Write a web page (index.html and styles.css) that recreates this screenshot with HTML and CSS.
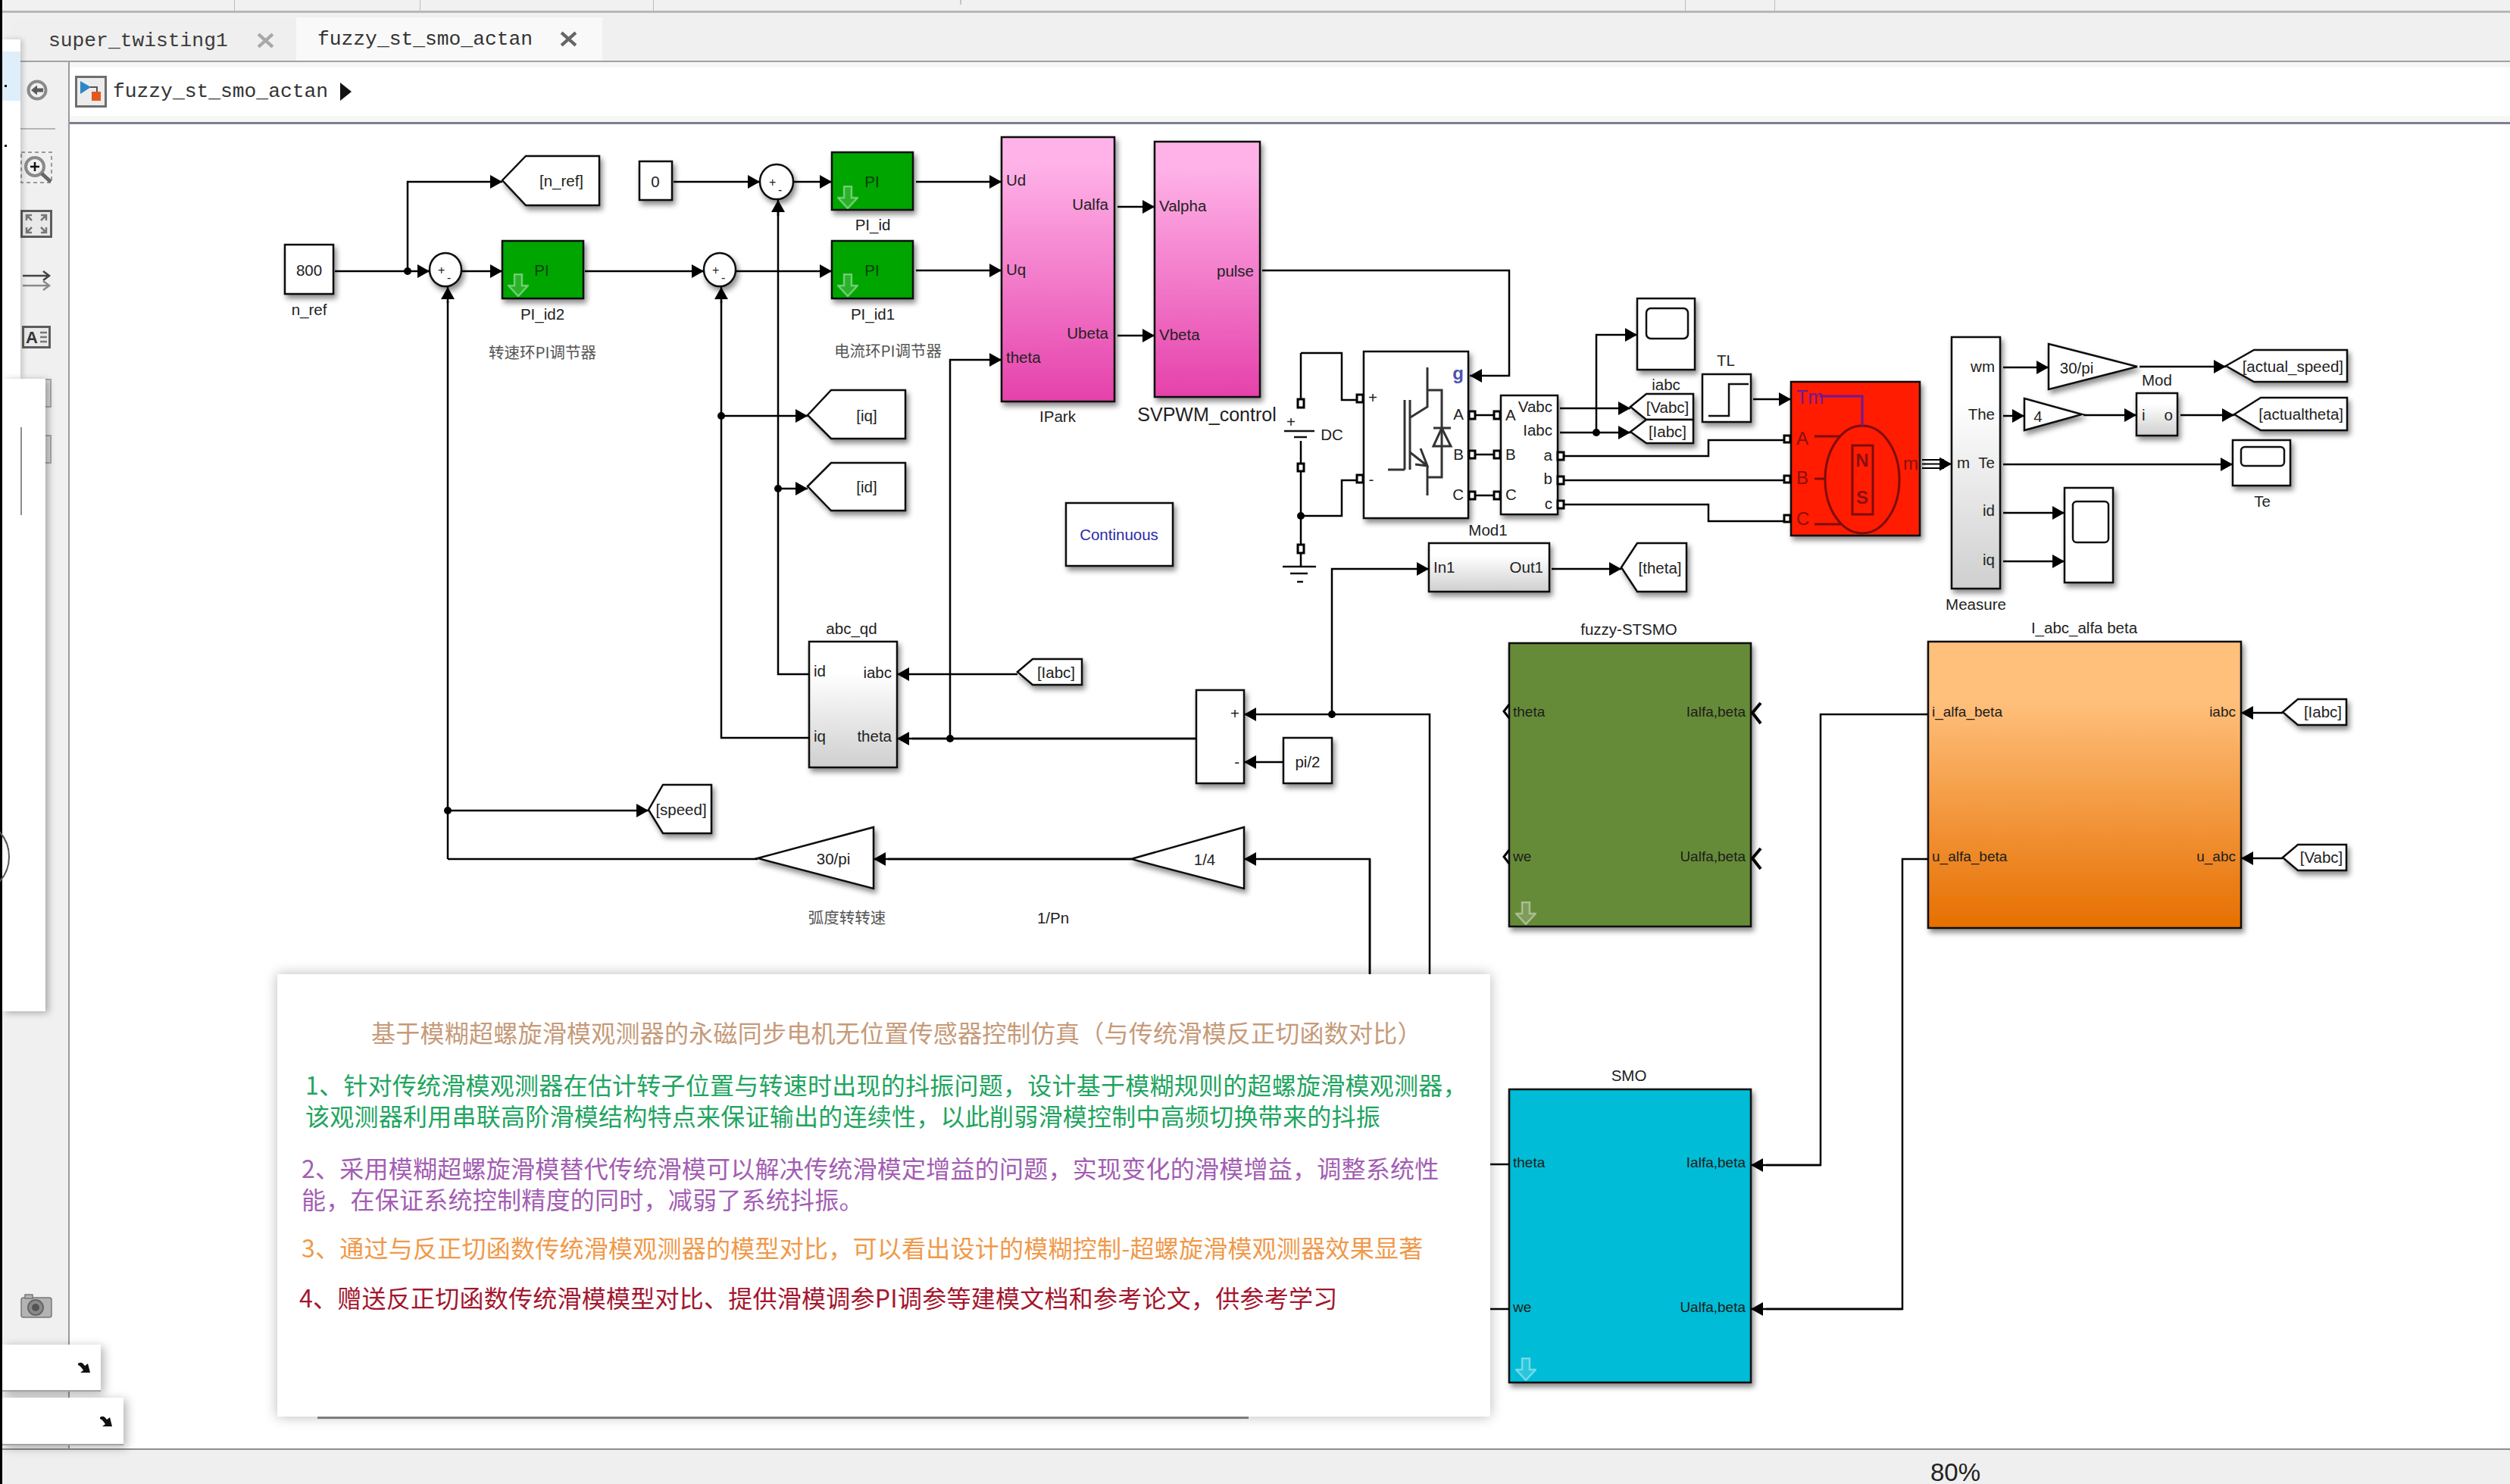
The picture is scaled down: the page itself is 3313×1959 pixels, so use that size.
FILE: index.html
```html
<!DOCTYPE html>
<html lang="zh-Hans">
<head>
  <meta charset="UTF-8">
  <title>fuzzy_st_smo_actan</title>
  <link rel="stylesheet" href="styles.css">
</head>
<body>
<div class="app">
  <div class="top-strip">
    <span class="strip-cell c1"></span><span class="strip-cell c2"></span><span class="strip-cell c3"></span>
    <span class="strip-cell c4"></span><span class="strip-cell c5"></span><span class="strip-cell c6"></span>
  </div>

  <div class="tabbar">
    <div class="tab">
      <span>super_twisting1</span>
      <svg class="tab-x" viewBox="0 0 22 20"><path d="M2 2L20 18M20 2L2 18"/></svg>
    </div>
    <div class="tab active">
      <span>fuzzy_st_smo_actan</span>
      <svg class="tab-x" viewBox="0 0 22 20"><path d="M2 2L20 18M20 2L2 18"/></svg>
    </div>
  </div>

  <div class="workspace">
    <aside class="toolbar">
      <svg class="tool tool-back" viewBox="0 0 28 28"><circle class="ring" cx="14" cy="14" r="11.5"/><path class="solid" d="M6 14l8-6.5v4h8v5h-8v4z"/></svg>
      <div class="tool-sep"></div>
      <svg class="tool tool-zoom" viewBox="0 0 42 42"><rect class="dash" x="1" y="1" width="40" height="40"/><circle class="ring" cx="19" cy="20" r="12"/><path class="plus" d="M19 14v12M13 20h12"/><path class="thick" d="M28 29l12 11"/></svg>
      <svg class="tool tool-fit" viewBox="0 0 42 37"><rect class="frame" x="1.5" y="1.5" width="39" height="34"/><path class="corner" d="M8 14V7h7M8 7l7 7M34 14V7h-7M34 7l-7 7M8 23v7h7M8 30l7-7M34 23v7h-7M34 30l-7-7"/></svg>
      <svg class="tool tool-route" viewBox="0 0 40 28"><path class="r1" d="M2 7h35M29 1l8 6-8 6"/><path class="r2" d="M2 20h35M29 14l8 6-8 6"/></svg>
      <svg class="tool tool-note" viewBox="0 0 38 30"><rect class="frame" x="1.5" y="1.5" width="35" height="27"/><text x="5" y="23">A</text><path class="corner" d="M24 9h9M24 15h9M24 21h9"/></svg>
      <div class="tool-stub stub-a"></div>
      <div class="tool-stub stub-b"></div>
      <svg class="tool tool-camera" viewBox="0 0 42 32"><rect class="cam" x="1" y="5" width="40" height="26" rx="3"/><rect class="cam" x="6" y="1" width="10" height="5"/><circle class="lens" cx="20" cy="18" r="10"/><circle class="lens-in" cx="20" cy="18" r="5"/></svg>
    </aside>

    <main class="canvas-col">
      <div class="breadcrumb">
        <div class="crumb-row">
          <svg class="crumb-icon" viewBox="0 0 42 42"><rect x="1.5" y="1.5" width="39" height="39" fill="#ececec" stroke="#6e6e6e" stroke-width="3"/><path d="M7 7l14 8-14 9z" fill="#2f86c6"/><path d="M20 15h9v7" fill="none" stroke="#555" stroke-width="2"/><rect x="22" y="21" width="12" height="12" fill="#e2591f"/></svg>
          <span class="crumb-text">fuzzy_st_smo_actan</span>
          <span class="crumb-arrow"></span>
        </div>
      </div>

      <div class="canvas">
        <svg class="diagram" viewBox="92 164 3221 1748" width="3221" height="1748">
          <defs>
            <filter id="sh" x="-5%" y="-5%" width="110%" height="110%">
              <feDropShadow dx="3" dy="5" stdDeviation="3.5" flood-color="#000" flood-opacity=".45"/>
            </filter>
            <linearGradient id="gPink" x1="0" y1="0" x2="0" y2="1"><stop offset=".1" stop-color="#ffb2e8"/><stop offset="1" stop-color="#e541aa"/></linearGradient>
            <linearGradient id="gGray" x1="0" y1="0" x2="0" y2="1"><stop offset=".25" stop-color="#fff"/><stop offset="1" stop-color="#cfcfcf"/></linearGradient>
            <linearGradient id="gOrange" x1="0" y1="0" x2="0" y2="1"><stop offset=".2" stop-color="#ffc07c"/><stop offset="1" stop-color="#e66f00"/></linearGradient>
            <marker id="ah" markerUnits="userSpaceOnUse" markerWidth="18" markerHeight="20" refX="17" refY="9" orient="auto">
              <path d="M1 0L17 9L1 18z" fill="#000"/>
            </marker>
            <symbol id="down" viewBox="0 0 28 31">
              <path d="M9 1h10v15h8L14 30 1 16h8z" fill="rgba(255,255,255,.16)" stroke="rgba(255,255,255,.4)" stroke-width="2.5"/>
            </symbol>
          </defs>

          <!-- blocks -->
          <g class="blk" filter="url(#sh)">
            <rect x="376" y="323" width="64" height="65"/>
            <polygon points="663,238 694,206 791,206 791,271 694,271"/>
            <rect x="844" y="213" width="43" height="51"/>
            <ellipse cx="1025" cy="240" rx="22" ry="23"/>
            <ellipse cx="588" cy="356" rx="21" ry="22"/>
            <ellipse cx="950" cy="356" rx="21" ry="22"/>
            <rect class="green" x="663" y="318" width="107" height="76"/>
            <rect class="green" x="1098" y="201" width="107" height="76"/>
            <rect class="green" x="1098" y="318" width="107" height="76"/>
            <rect x="1322" y="181" width="149" height="349" fill="url(#gPink)"/>
            <rect x="1524" y="187" width="139" height="337" fill="url(#gPink)"/>
            <polygon points="1066,548 1097,515 1195,515 1195,579 1097,579"/>
            <polygon points="1066,642 1097,611 1195,611 1195,674 1097,674"/>
            <rect x="1407" y="664" width="141" height="83"/>
            <rect x="1800" y="464" width="138" height="220"/>
            <rect x="1981" y="522" width="75" height="157"/>
            <rect x="2161" y="394" width="76" height="94"/>
            <polygon points="2152,537 2173,520 2235,520 2235,554 2173,554"/>
            <polygon points="2152,570 2173,554 2235,554 2235,585 2173,585"/>
            <rect x="2247" y="494" width="64" height="63"/>
            <rect class="red" x="2364" y="504" width="170" height="203"/>
            <rect x="2576" y="445" width="64" height="332" fill="url(#gGray)"/>
            <polygon points="2704,454 2821,484 2704,514"/>
            <polygon points="2672,526 2748,547 2672,568"/>
            <rect x="2820" y="519" width="54" height="56" fill="url(#gGray)"/>
            <polygon points="2938,483 2975,462 3098,462 3098,504 2975,504"/>
            <polygon points="2949,547 2984,525 3098,525 3098,568 2984,568"/>
            <rect x="2947" y="581" width="76" height="60"/>
            <rect x="2725" y="644" width="64" height="125"/>
            <rect x="1886" y="717" width="159" height="64" fill="url(#gGray)"/>
            <polygon points="2140,749 2161,717 2226,717 2226,781 2161,781"/>
            <rect x="1068" y="847" width="116" height="166" fill="url(#gGray)"/>
            <polygon points="1343,887 1363,870 1428,870 1428,904 1363,904"/>
            <rect x="1579" y="911" width="63" height="123"/>
            <rect x="1694" y="974" width="64" height="60"/>
            <polygon points="856,1069 875,1036 939,1036 939,1100 875,1100"/>
            <polygon points="1000,1133 1153,1092 1153,1173"/>
            <polygon points="1493,1134 1642,1092 1642,1173"/>
            <rect class="olive" x="1992" y="849" width="319" height="374"/>
            <rect class="cyan" x="1992" y="1438" width="319" height="387"/>
            <rect x="2545" y="847" width="413" height="378" fill="url(#gOrange)"/>
            <polygon points="3013,940 3033,923 3097,923 3097,957 3033,957"/>
            <polygon points="3013,1132 3033,1115 3097,1115 3097,1149 3033,1149"/>
          </g>

          <!-- scope screens, motor and inverter drawings -->
          <g class="draw">
            <rect x="2173" y="407" width="55" height="40" rx="6"/>
            <rect x="2958" y="590" width="57" height="25" rx="5"/>
            <rect x="2736" y="662" width="47" height="54" rx="5"/>
            <path d="M2255 549h27v-42h26"/>
            <path class="igbt" d="M1884 485v52l-24 15M1884 515h19v115h-19M1884 615v39M1854 528v92M1861 528v92M1832 620h22M1861 597l23 18M1875 592l9 23-16-2"/>
            <path class="igbt" d="M1892 565h23M1903 565l-11 24h23z"/>
            <path d="M1695 569h40M1708 577h17M1693 748h44M1703 757h23M1712 768h8"/>
          </g>
          <g class="motor">
            <ellipse cx="2458" cy="633" rx="49" ry="71"/>
            <rect x="2445" y="588" width="27" height="91"/>
            <path d="M2395 576h35M2395 632h13M2395 692h35"/>
            <path class="tm" d="M2402 523h56v39"/>
          </g>

          <!-- wires -->
          <g class="w">
            <path d="M591 397V1134M591 1134H1000"/>
            <path d="M952 397V974H1068"/>
            <path d="M1027 280V890H1068"/>
            <path d="M1204 975H1579"/>
            <path d="M1172 1134H1493"/>
            <path d="M1808 1134V1290"/>
            <path d="M1717 466H1771V528H1792M1717 466V527M1717 582V724M1717 681H1771V634H1792M1717 724V748"/>
            <path d="M1947 548H1972M1947 600H1972M1947 654H1972"/>
            <path d="M2064 602H2255V581H2354M2064 634H2354M2064 666H2255V688H2354"/>
            <path class="bus" d="M2537 607H2566M2537 612.5H2566M2537 618H2566"/>
            <path d="M1965 1537H1992M1965 1728H1992"/>
            <path d="M2331 1538H2403V943H2545"/>
            <path d="M2331 1728H2511V1134H2545"/>
          </g>
          <g class="w" marker-end="url(#ah)">
            <path d="M442 358H567"/>
            <path d="M538 358V240H663"/>
            <path d="M610 358H663"/>
            <path d="M772 358H929"/>
            <path d="M972 358H1098"/>
            <path d="M889 240H1003"/>
            <path d="M1047 240H1098"/>
            <path d="M591 400V379"/>
            <path d="M952 400V379"/>
            <path d="M1027 285V264"/>
            <path d="M1209 240H1322"/>
            <path d="M1209 357H1322"/>
            <path d="M1254 975V475H1322"/>
            <path d="M1475 273H1524"/>
            <path d="M1475 443H1524"/>
            <path d="M1666 357H1992V496H1940"/>
            <path d="M952 549H1066"/>
            <path d="M1027 645H1066"/>
            <path d="M2059 539H2152"/>
            <path d="M2059 571H2152"/>
            <path d="M2107 571V442H2161"/>
            <path d="M2314 527H2364"/>
            <path class="bus" d="M2560 612.5H2576"/>
            <path d="M2644 485H2704"/>
            <path d="M2824 484H2938"/>
            <path d="M2644 549H2672"/>
            <path d="M2750 548H2820"/>
            <path d="M2878 548H2949"/>
            <path d="M2644 613H2947"/>
            <path d="M2644 677H2725"/>
            <path d="M2644 741H2725"/>
            <path d="M2048 751H2140"/>
            <path d="M1758 943V751H1886"/>
            <path d="M1343 890H1184"/>
            <path d="M1579 975H1184"/>
            <path d="M1887 1290V943H1642"/>
            <path d="M1694 1006H1642"/>
            <path d="M1808 1290V1134H1642"/>
            <path d="M1493 1134H1153"/>
            <path d="M591 1070H856"/>
            <path d="M2403 1538H2311"/>
            <path d="M2511 1728H2311"/>
            <path d="M3013 941H2958"/>
            <path d="M3013 1133H2958"/>
          </g>
          <g class="chev">
            <path d="M1992 930l-7 9 7 9M1992 1122l-7 9 7 9"/>
            <path class="big" d="M2324 928l-11 13 11 14M2324 1120l-11 13 11 14"/>
          </g>

          <!-- junctions and ports -->
          <g class="dot">
            <circle cx="538" cy="358" r="5"/><circle cx="591" cy="1070" r="5"/>
            <circle cx="952" cy="549" r="5"/><circle cx="1027" cy="645" r="5"/>
            <circle cx="1254" cy="975" r="5"/><circle cx="1758" cy="943" r="5"/>
            <circle cx="1717" cy="681" r="5"/><circle cx="2107" cy="571" r="5"/>
          </g>
          <g class="port">
            <rect x="1791" y="521" width="8" height="10"/><rect x="1791" y="627" width="8" height="10"/>
            <rect x="1713" y="527" width="8" height="11"/><rect x="1713" y="612" width="8" height="10"/><rect x="1713" y="719" width="8" height="11"/>
            <rect x="1939" y="543" width="8" height="10"/><rect x="1939" y="595" width="8" height="10"/><rect x="1939" y="649" width="8" height="10"/>
            <rect x="1972" y="543" width="8" height="10"/><rect x="1972" y="595" width="8" height="10"/><rect x="1972" y="649" width="8" height="10"/>
            <rect x="2056" y="597" width="8" height="10"/><rect x="2056" y="629" width="8" height="10"/><rect x="2056" y="661" width="8" height="10"/>
            <rect x="2355" y="575" width="8" height="9"/><rect x="2355" y="628" width="8" height="9"/><rect x="2355" y="680" width="8" height="9"/>
          </g>
          <use href="#down" x="670" y="361" width="28" height="31"/>
          <use href="#down" x="1105" y="245" width="28" height="31"/>
          <use href="#down" x="1105" y="361" width="28" height="31"/>
          <use href="#down" x="2000" y="1190" width="28" height="31"/>
          <use href="#down" x="2000" y="1792" width="28" height="31"/>

          <!-- labels -->
          <g class="t">
            <text class="m" x="408" y="356">800</text>
            <text class="m" x="408" y="408">n_ref</text>
            <text class="m" x="741" y="238">[n_ref]</text>
            <text class="m" x="865" y="239">0</text>
            <text class="m" x="716" y="414">PI_id2</text>
            <text class="m" x="1152" y="296">PI_id</text>
            <text class="m" x="1152" y="414">PI_id1</text>
            <text class="m dk" x="715" y="356">PI</text>
            <text class="m dk" x="1151" y="239">PI</text>
            <text class="m dk" x="1151" y="356">PI</text>
            <text class="sm" x="1015" y="240">+</text><text class="sm" x="1027" y="250">-</text>
            <text class="sm" x="578" y="356">+</text><text class="sm" x="590" y="366">-</text>
            <text class="sm" x="940" y="356">+</text><text class="sm" x="952" y="366">-</text>
            <text class="m cn" x="716" y="464">转速环PI调节器</text>
            <text class="m cn" x="1172" y="462">电流环PI调节器</text>
            <text class="m cn" x="1118" y="1210">弧度转转速</text>
            <text class="m" x="1390" y="1211">1/Pn</text>
            <text x="1328" y="237">Ud</text><text x="1328" y="355">Uq</text><text x="1328" y="471">theta</text>
            <text class="e" x="1463" y="269">Ualfa</text><text class="e" x="1463" y="439">Ubeta</text>
            <text class="m" x="1396" y="549">IPark</text>
            <text x="1530" y="271">Valpha</text><text x="1530" y="441">Vbeta</text>
            <text class="e" x="1655" y="357">pulse</text>
            <text class="m big" x="1593" y="547">SVPWM_control</text>
            <text class="m" x="1144" y="548">[iq]</text>
            <text class="m" x="1144" y="642">[id]</text>
            <text class="m blue" x="1477" y="705">Continuous</text>
            <text x="1704" y="556" class="m">+</text>
            <text class="m" x="1758" y="573">DC</text>
            <text class="m" x="1812" y="524">+</text><text class="m" x="1810" y="632">-</text>
            <text class="e gate b" x="1932" y="492">g</text>
            <text class="e" x="1932" y="546">A</text><text class="e" x="1932" y="599">B</text><text class="e" x="1932" y="652">C</text>
            <text x="1987" y="547">A</text><text x="1987" y="599">B</text><text x="1987" y="652">C</text>
            <text class="e" x="2049" y="536">Vabc</text><text class="e" x="2049" y="567">Iabc</text>
            <text class="e" x="2049" y="600">a</text><text class="e" x="2049" y="631">b</text><text class="e" x="2049" y="664">c</text>
            <text class="m" x="1964" y="699">Mod1</text>
            <text class="m" x="2199" y="507">iabc</text>
            <text class="m" x="2201" y="537">[Vabc]</text>
            <text class="m" x="2201" y="569">[Iabc]</text>
            <text class="m" x="2278" y="475">TL</text>
            <text class="tmt" x="2371" y="524">Tm</text>
            <text class="mot" x="2371" y="578">A</text><text class="mot" x="2371" y="630">B</text><text class="mot" x="2371" y="684">C</text>
            <text class="mot" x="2512" y="611">m</text>
            <text class="m mot b" x="2458" y="607">N</text><text class="m mot b" x="2458" y="656">S</text>
            <text x="2583" y="610">m</text>
            <text class="e" x="2633" y="483">wm</text><text class="e" x="2633" y="546">The</text><text class="e" x="2633" y="610">Te</text>
            <text class="e" x="2633" y="673">id</text><text class="e" x="2633" y="738">iq</text>
            <text class="m" x="2608" y="797">Measure</text>
            <text class="m" x="2741" y="485">30/pi</text>
            <text class="m" x="2847" y="501">Mod</text>
            <text class="m" x="2690" y="549">4</text>
            <text x="2827" y="547">i</text><text class="e" x="2868" y="547">o</text>
            <text class="e" x="3093" y="483">[actual_speed]</text>
            <text class="e" x="3093" y="546">[actualtheta]</text>
            <text class="m" x="2986" y="661">Te</text>
            <text x="1892" y="748">In1</text><text class="e" x="2037" y="748">Out1</text>
            <text class="m" x="2191" y="749">[theta]</text>
            <text class="m" x="1124" y="829">abc_qd</text>
            <text x="1074" y="885">id</text><text x="1074" y="971">iq</text>
            <text class="e" x="1177" y="887">iabc</text><text class="e" x="1177" y="971">theta</text>
            <text class="m" x="1394" y="887">[Iabc]</text>
            <text class="e" x="1636" y="941">+</text><text class="e" x="1636" y="1005">-</text>
            <text class="m" x="1726" y="1005">pi/2</text>
            <text class="m" x="899" y="1068">[speed]</text>
            <text class="m" x="1100" y="1133">30/pi</text>
            <text class="m" x="1590" y="1134">1/4</text>
            <text class="m" x="2150" y="830">fuzzy-STSMO</text>
            <text class="sub" x="1997" y="939">theta</text><text class="sub" x="1997" y="1130">we</text>
            <text class="sub e" x="2304" y="939">Ialfa,beta</text><text class="sub e" x="2304" y="1130">Ualfa,beta</text>
            <text class="m" x="2150" y="1419">SMO</text>
            <text class="sub" x="1997" y="1534">theta</text><text class="sub" x="1997" y="1725">we</text>
            <text class="sub e" x="2304" y="1534">Ialfa,beta</text><text class="sub e" x="2304" y="1725">Ualfa,beta</text>
            <text class="m" x="2751" y="828">I_abc_alfa beta</text>
            <text class="sub" x="2550" y="939">i_alfa_beta</text><text class="sub" x="2550" y="1130">u_alfa_beta</text>
            <text class="sub e" x="2951" y="939">iabc</text><text class="sub e" x="2951" y="1130">u_abc</text>
            <text class="m" x="3066" y="939">[Iabc]</text>
            <text class="m" x="3064" y="1131">[Vabc]</text>
          </g>
        </svg>
      </div>
    </main>
  </div>

  <div class="statusbar"><span class="zoom-level">80%</span></div>

  <!-- window pieces lying over the editor on the left -->
  <div class="edge-strip"></div>
  <div class="side-panel">
    <div class="side-top"><span class="side-sel"></span><span class="side-dot d1"></span><span class="side-dot d2"></span></div>
    <div class="side-bottom"></div>
  </div>
  <div class="edge-arc"></div>
  <div class="side-tip"></div>
  <div class="popup pop-a"><svg class="pop-arrow" viewBox="0 0 20 16"><path d="M1 3c4-3 7 0 9 3l4-3 3 12H4l4-3C6 9 4 6 1 5z"/></svg></div>
  <div class="popup pop-b"><svg class="pop-arrow" viewBox="0 0 20 16"><path d="M1 3c4-3 7 0 9 3l4-3 3 12H4l4-3C6 9 4 6 1 5z"/></svg></div>

  <!-- description panel -->
  <section class="note">
    <h2 class="note-title">基于模糊超螺旋滑模观测器的永磁同步电机无位置传感器控制仿真（与传统滑模反正切函数对比）</h2>
    <p class="p1">1、针对传统滑模观测器在估计转子位置与转速时出现的抖振问题，设计基于模糊规则的超螺旋滑模观测器，<br>该观测器利用串联高阶滑模结构特点来保证输出的连续性，以此削弱滑模控制中高频切换带来的抖振</p>
    <p class="p2">2、采用模糊超螺旋滑模替代传统滑模可以解决传统滑模定增益的问题，实现变化的滑模增益，调整系统性<br>能，在保证系统控制精度的同时，减弱了系统抖振。</p>
    <p class="p3">3、通过与反正切函数传统滑模观测器的模型对比，可以看出设计的模糊控制-超螺旋滑模观测器效果显著</p>
    <p class="p4">4、赠送反正切函数传统滑模模型对比、提供滑模调参PI调参等建模文档和参考论文，供参考学习</p>
  </section>
</div>
</body>
</html>
```

FILE: styles.css
```css
* {
  box-sizing: border-box;
  margin: 0;
  padding: 0;
}

body {
  background: #f0f0f0;
  font-family: "Liberation Sans", sans-serif;
  overflow: hidden;
}

.app {
  position: relative;
  width: 3313px;
  height: 1959px;
  display: flex;
  flex-direction: column;
  background: #f0f0f0;
  overflow: hidden;
}

/* top ribbon remains */
.top-strip {
  height: 17px;
  display: flex;
  background: #f1f1f1;
  border-bottom: 3px solid #b8b8b8;
}

.strip-cell {
  border-right: 1.5px solid #bdbdbd;
}
.c1 { width: 310px; }
.c2 { width: 245px; }
.c3 { width: 308px; }
.c4 {
  width: 406px;
  border-right: none;
  background: linear-gradient(#c4c4c4, #c4c4c4) right top / 2px 6px no-repeat;
}
.c5 { width: 956px; }
.c6 { width: 118px; }

/* tabs */
.tabbar {
  height: 65px;
  display: flex;
  align-items: flex-end;
  padding-left: 14px;
  background: #f0f0f0;
  border-bottom: 2px solid #a2a2a2;
}

.tab {
  height: 53px;
  width: 377px;
  display: flex;
  align-items: center;
  padding-left: 50px;
  font-family: "Liberation Mono", monospace;
  font-size: 26.3px;
  color: #3c3c3c;
  background: #efefef;
}

.tab.active {
  height: 57px;
  width: 404px;
  padding-left: 28px;
  background: #f9f9f9;
  color: #333;
}

.tab-x {
  width: 23px;
  height: 21px;
  margin-left: 38px;
  fill: none;
  stroke: #a8a8a8;
  stroke-width: 4;
}

.tab.active .tab-x {
  margin-left: 36px;
  stroke: #666;
}

/* editor area */
.workspace {
  flex: 1;
  min-height: 0;
  display: flex;
}

.toolbar {
  width: 92px;
  flex-shrink: 0;
  display: flex;
  flex-direction: column;
  align-items: flex-start;
  padding: 23px 0 0 27px;
  background: #f0f0f0;
  border-right: 2px solid #9a9a9a;
}

.tool {
  display: block;
  fill: none;
  stroke: #555;
  stroke-width: 2.5;
}

.tool .solid { fill: #5a5a5a; stroke: none; }
.tool .ring { stroke: #8a8a8a; stroke-width: 4; }
.tool .plus { stroke: #111; stroke-width: 2.5; }
.tool .thick { stroke-width: 5; stroke: #666; }
.tool .dash { stroke: #999; stroke-dasharray: 5 4; stroke-width: 2; }
.tool .frame { stroke: #5c5c5c; stroke-width: 3; fill: #e9e9e9; }
.tool .corner { stroke: #777; }
.tool .r1 { stroke: #444; }
.tool .r2 { stroke: #8a8a8a; }
.tool text {
  font-family: "Liberation Sans", sans-serif;
  font-size: 22px;
  font-weight: 700;
  fill: #333;
  stroke: none;
}

.tool-back { width: 28px; height: 28px; margin-left: 8px; }
.tool-sep { width: 46px; height: 2px; margin-top: 36px; background: #b5b5b5; }
.tool-zoom { width: 42px; height: 42px; margin-top: 29px; }
.tool-fit { width: 42px; height: 37px; margin-top: 35px; }
.tool-route { width: 40px; height: 28px; margin-top: 43px; margin-left: 1px; }
.tool-note { width: 38px; height: 30px; margin-top: 45px; margin-left: 2px; }

.tool-stub {
  width: 40px;
  height: 38px;
  margin-left: 1px;
  background: #ddd;
  border: 2px solid #aaa;
}
.stub-a { margin-top: 40px; }
.stub-b { margin-top: 36px; }

.tool-camera {
  width: 42px;
  height: 32px;
  margin-top: auto;
  margin-bottom: 172px;
  stroke: none;
}
.tool .cam { fill: #b3b3b3; stroke: #777; stroke-width: 1.5; }
.tool .lens { fill: #8a8a8a; stroke: #666; stroke-width: 2; }
.tool .lens-in { fill: #555; }

.canvas-col {
  flex: 1;
  min-width: 0;
  display: flex;
  flex-direction: column;
}

.breadcrumb {
  height: 82px;
  padding: 7px 0 8px;
  background: #f6f6f6;
  border-bottom: 3px solid #7b8090;
}

.crumb-row {
  height: 64px;
  display: flex;
  align-items: center;
  padding-left: 7px;
  background: #fff;
}

.crumb-icon {
  width: 42px;
  height: 42px;
}

.crumb-text {
  margin-left: 8px;
  font-family: "Liberation Mono", monospace;
  font-size: 26.3px;
  color: #333;
}

.crumb-arrow {
  width: 0;
  height: 0;
  margin-left: 16px;
  border-left: 15px solid #111;
  border-top: 12px solid transparent;
  border-bottom: 12px solid transparent;
}

.canvas {
  flex: 1;
  min-height: 0;
  background: #fff;
  overflow: hidden;
}

.diagram {
  display: block;
}

/* diagram parts */
.blk {
  fill: #fff;
  stroke: #111;
  stroke-width: 2.5;
}
.blk .green { fill: #00a500; }
.blk .red { fill: #ff1a00; }
.blk .olive { fill: #668b38; }
.blk .cyan { fill: #00bcd6; }

.draw {
  fill: none;
  stroke: #111;
  stroke-width: 2.5;
}
.draw .igbt { stroke: #333; stroke-width: 3; }

.motor {
  fill: none;
  stroke: #7d0c0c;
  stroke-width: 3;
}
.motor .tm { stroke: #6b1a9a; }

.w {
  fill: none;
  stroke: #000;
  stroke-width: 2.5;
}
.w .bus { stroke-width: 2; }

.chev {
  fill: none;
  stroke: #000;
  stroke-width: 3;
}
.chev .big { stroke-width: 4; }

.dot { fill: #000; }

.port {
  fill: #fff;
  stroke: #000;
  stroke-width: 3;
}

.t text {
  font-family: "Liberation Sans", sans-serif;
  font-size: 20.5px;
  fill: #222;
  dominant-baseline: central;
}
.t .m { text-anchor: middle; }
.t .e { text-anchor: end; }
.t .b { font-weight: 700; }
.t .big { font-size: 25px; }
.t .dk { fill: #063f06; }
.t .sm { font-size: 16px; }
.t .blue { fill: #2a2aa8; }
.t .gate { fill: #4a55b0; font-size: 24px; }
.t .cn {
  font-family: "Noto Sans CJK SC", sans-serif;
  fill: #555;
}
.t .sub { font-size: 19px; fill: #1d1d1d; }
.t .mot { fill: #8c0f0f; font-size: 24px; }
.t .tmt { fill: #6b1a9a; font-size: 25px; }

/* status bar */
.statusbar {
  height: 47px;
  flex-shrink: 0;
  padding: 15px 0 0 2548px;
  background: #efefef;
  border-top: 2px solid #8e8e8e;
}

.zoom-level {
  display: block;
  font-size: 33px;
  line-height: 30px;
  color: #222;
}

/* windows over the editor */
.edge-strip {
  position: absolute;
  left: 0;
  top: 0;
  width: 3px;
  height: 100%;
  background: #000;
}

.side-panel {
  position: absolute;
  left: 3px;
  top: 52px;
}

.side-top {
  position: relative;
  width: 24px;
  height: 448px;
  background: #fff;
  box-shadow: 3px 0 7px rgba(0, 0, 0, 0.18);
}

.side-sel {
  position: absolute;
  left: 0;
  top: 16px;
  width: 24px;
  height: 65px;
  background: #deeefb;
}

.side-dot {
  position: absolute;
  left: 3px;
  width: 3px;
  height: 3px;
  background: #111;
}
.d1 { top: 60px; }
.d2 { top: 139px; }

.side-bottom {
  position: relative;
  width: 57px;
  height: 835px;
  background: #fff;
  box-shadow: 4px 2px 9px rgba(0, 0, 0, 0.3);
}

.edge-arc {
  position: absolute;
  left: -87px;
  top: 1081px;
  width: 100px;
  height: 100px;
  border: 2px solid #555;
  border-radius: 50%;
}

.side-tip {
  position: absolute;
  left: 27px;
  top: 564px;
  width: 2px;
  height: 116px;
  background: #8c8c8c;
}

.popup {
  position: absolute;
  left: 3px;
  display: flex;
  justify-content: flex-end;
  align-items: center;
  background: #fff;
  box-shadow: 4px 3px 12px rgba(0, 0, 0, 0.3);
}

.pop-a {
  top: 1775px;
  width: 130px;
  height: 62px;
  padding-right: 11px;
  border-bottom: 2px solid #a5a5a5;
}

.pop-b {
  top: 1845px;
  width: 160px;
  height: 63px;
  padding-right: 12px;
  border-bottom: 2px solid #a5a5a5;
}

.pop-arrow {
  width: 20px;
  height: 16px;
  fill: #111;
}

/* description panel */
.note {
  position: absolute;
  left: 366px;
  top: 1286px;
  width: 1601px;
  height: 584px;
  padding-top: 56px;
  background: #fff;
  box-shadow: 0 0 16px rgba(0, 0, 0, 0.28);
  font-family: "Noto Sans CJK SC", sans-serif;
  font-size: 32px;
  font-weight: 400;
  letter-spacing: 0.25px;
  line-height: 41px;
  white-space: nowrap;
}

.note::after {
  content: "";
  position: absolute;
  left: 53px;
  top: 100%;
  width: 1229px;
  height: 3px;
  background: #7c7c7c;
}

.note-title {
  margin-left: 124px;
  font-size: inherit;
  font-weight: 400;
  color: #c69a79;
}

.p1 { margin: 28px 0 0 37px; color: #1fa55f; }
.p2 { margin: 28px 0 0 32px; color: #a35db3; }
.p3 { margin: 23px 0 0 32px; color: #f0994a; }
.p4 { margin: 25px 0 0 29px; color: #a4162e; }
```
